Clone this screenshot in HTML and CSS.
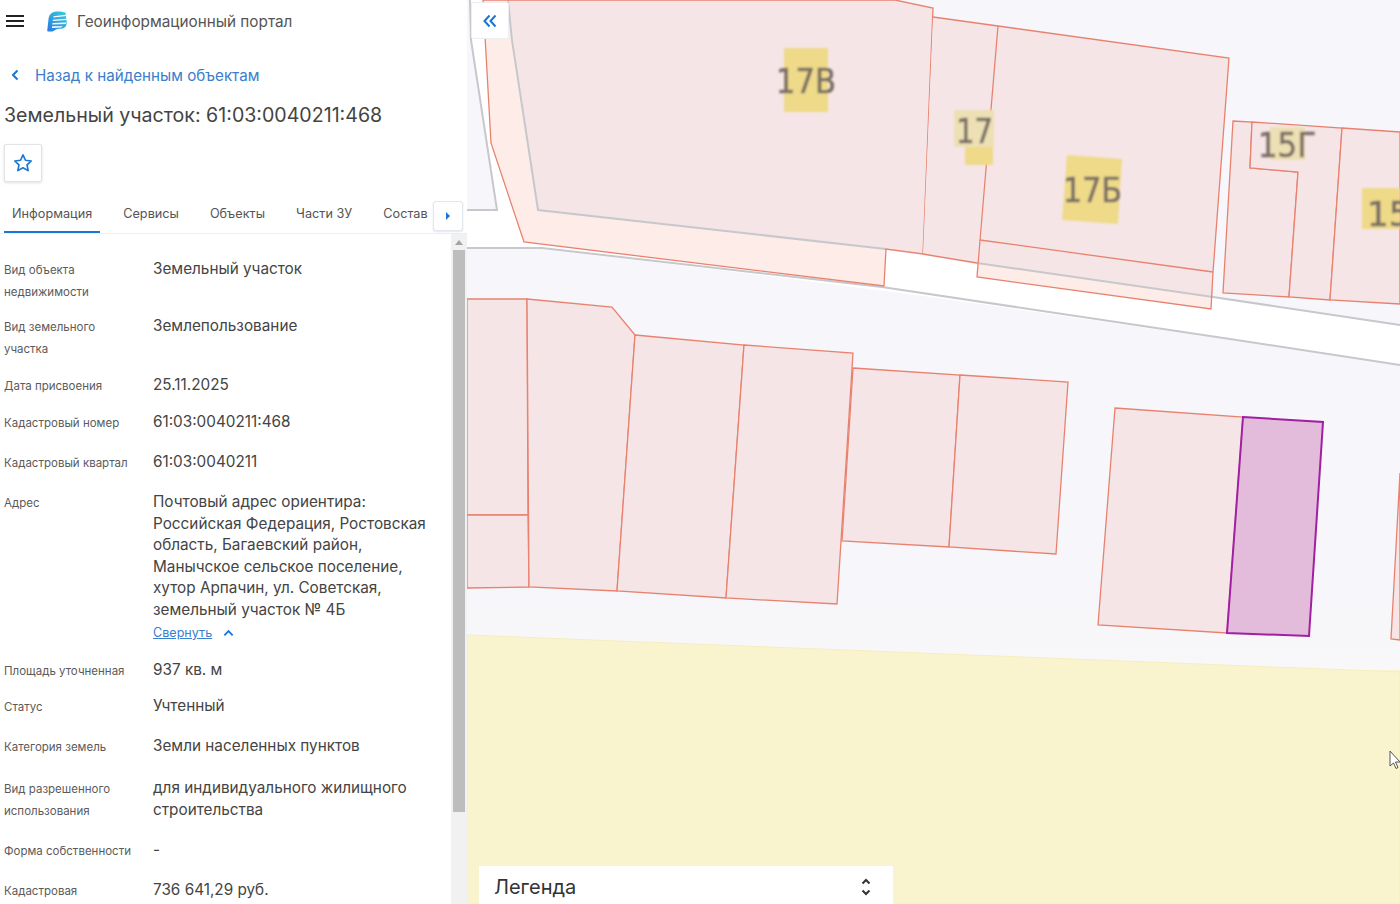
FILE: index.html
```html
<!DOCTYPE html>
<html lang="ru">
<head>
    <meta charset="UTF-8">
    <title>Геоинформационный портал</title>
    <link rel="stylesheet" href="styles.css">
</head>
<body>
    <div class="app">
        <aside class="panel">
            <header class="topbar">
                <button class="menu-btn" aria-label="Меню"><span></span><span></span><span></span></button>
                <svg class="logo" viewBox="0 0 20 21" aria-hidden="true">
                    <defs>
                        <linearGradient id="logoFill" x1="0" y1="1" x2="1" y2="0">
                            <stop offset="0" stop-color="#2a78e4"/>
                            <stop offset="1" stop-color="#3bd0dc"/>
                        </linearGradient>
                    </defs>
                    <path fill="url(#logoFill)" d="M9 .5c3.500-.3 7 .2 9.500 1L19.800 12c-.2 3-1.800 5-4.300 5.500L10 18l-4.500 2.500H1.500C.6 20.500.2 20 .3 19L1.500 8C2 3.500 5 .9 9 .5z"/>
                    <path fill="#fff" d="M6.500 5.200L19 3.800l.2 1.300-12.900 1.500zM5.900 8.700l13.600-.9v1.300l-13.700.9zM5.500 12.100l13.700-.5-.2 1.300-13.600.5zM5.100 15.300l10.900 0-2 1.300-9 .5z"/>
                </svg>
                <span class="portal-name">Геоинформационный портал</span>
            </header>

            <a class="back-link" href="#">
                <svg viewBox="0 0 8 12" aria-hidden="true"><path d="M6.500 1.500L2 6l4.500 4.500"/></svg>
                <span>Назад к найденным объектам</span>
            </a>

            <h1 class="object-title">Земельный участок: 61:03:0040211:468</h1>

            <button class="star-btn" aria-label="В избранное">
                <svg viewBox="0 0 24 24" aria-hidden="true"><path d="M12 3.200l2.700 5.800 6.300.8-4.600 4.300 1.200 6.200L12 17.200l-5.600 3.100 1.200-6.200L3 9.800l6.300-.8z"/></svg>
            </button>

            <nav class="tabs">
                <a class="tab active" href="#">Информация</a>
                <a class="tab" href="#">Сервисы</a>
                <a class="tab" href="#">Объекты</a>
                <a class="tab" href="#">Части ЗУ</a>
                <a class="tab" href="#">Состав</a>
                <button class="tabs-next" aria-label="Дальше"><span></span></button>
            </nav>

            <div class="details-wrap">
                <div class="details">
                    <div class="row row-57">
                        <div class="label">Вид объекта<br>недвижимости</div>
                        <div class="value">Земельный участок</div>
                    </div>
                    <div class="row row-59">
                        <div class="label">Вид земельного<br>участка</div>
                        <div class="value">Землепользование</div>
                    </div>
                    <div class="row row-37">
                        <div class="label">Дата присвоения</div>
                        <div class="value">25.11.2025</div>
                    </div>
                    <div class="row row-40">
                        <div class="label">Кадастровый номер</div>
                        <div class="value">61:03:0040211:468</div>
                    </div>
                    <div class="row row-40">
                        <div class="label">Кадастровый квартал</div>
                        <div class="value">61:03:0040211</div>
                    </div>
                    <div class="row row-address">
                        <div class="label">Адрес</div>
                        <div class="value">
                            Почтовый адрес ориентира:<br>
                            Российская Федерация, Ростовская<br>
                            область, Багаевский район,<br>
                            Манычское сельское поселение,<br>
                            хутор Арпачин, ул. Советская,<br>
                            земельный участок № 4Б
                            <a class="collapse-link" href="#">
                                <span>Свернуть</span>
                                <svg viewBox="0 0 12 8" aria-hidden="true"><path d="M1.500 6.500L6 2l4.500 4.500"/></svg>
                            </a>
                        </div>
                    </div>
                    <div class="row row-36">
                        <div class="label">Площадь уточненная</div>
                        <div class="value">937 кв. м</div>
                    </div>
                    <div class="row row-40">
                        <div class="label">Статус</div>
                        <div class="value">Учтенный</div>
                    </div>
                    <div class="row row-42">
                        <div class="label">Категория земель</div>
                        <div class="value">Земли населенных пунктов</div>
                    </div>
                    <div class="row row-62">
                        <div class="label">Вид разрешенного<br>использования</div>
                        <div class="value">для индивидуального жилищного<br>строительства</div>
                    </div>
                    <div class="row row-40">
                        <div class="label">Форма собственности</div>
                        <div class="value">-</div>
                    </div>
                    <div class="row">
                        <div class="label">Кадастровая</div>
                        <div class="value">736 641,29 руб.</div>
                    </div>
                </div>
                <div class="scrollbar">
                    <span class="scroll-up"></span>
                    <div class="scroll-thumb"></div>
                </div>
            </div>
        </aside>

        <main class="map">
            <svg class="map-canvas" viewBox="467 0 933 904" preserveAspectRatio="none" aria-hidden="true">
                <defs>
                    <filter id="soft"><feGaussianBlur stdDeviation="0.8"/></filter>
                    <linearGradient id="ground" x1="0" y1="0" x2="0" y2="1">
                        <stop offset="0" stop-color="#f6f6fb"/>
                        <stop offset="0.75" stop-color="#f6f6fb"/>
                        <stop offset="1" stop-color="#f8f8f9"/>
                    </linearGradient>
                </defs>

                <rect x="467" y="240" width="933" height="430" fill="url(#ground)"/>
                <polygon class="ground-top" points="467,0 1400,0 1400,330 467,250"/>
                <polygon class="sand" points="467,635 1400,672 1400,904 467,904"/>

                <!-- road -->
                <polygon class="road" points="467,0 483,0 491,143 524,242 467,247"/>
                <polygon class="road" points="467,212 538,210 886,249 980,265 1213,297 1400,325 1400,365 1230,340 930,297 760,275 542,249 467,248"/>
                <polygon class="yard" points="467,0 470,0 471,40 497,210 467,210"/>
                <polyline class="edge" points="470,0 471,40 497,210 467,210"/>
                <polyline class="edge" points="467,248 542,248 882,287 1230,339 1400,365"/>

                <!-- upper parcels -->
                <polygon class="parcel-strip" points="483,0 491,143 524,242 884,286 886,249 923,254 933,8 895,0"/>
                <polygon class="house" points="508,0 538,210 923,254 933,8 895,0"/>
                <polyline class="edge" points="508,0 512,40 538,210 886,249"/>
                <polyline class="edge" points="1213,297 1400,325"/>
                <polygon class="parcel-line" fill="none" points="483,0 491,143 524,242 884,286 886,249 923,254 933,8 895,0"/>

                <polygon class="house" points="933,17 998,26 977,263 923,254"/>
                <polygon class="parcel-strip" points="980,240 1213,272 1211,309 977,277"/>
                <polygon class="house" points="980,240 1213,272 1213,297 977,263"/>
                <polygon class="house" points="998,26 1229,58 1213,272 980,240"/>
                <polyline class="edge" points="977,263 1213,297"/>
                <polyline class="parcel-line" fill="none" points="933,17 998,26 1229,58 1213,272 1211,309 977,277 980,240 998,26"/>
                <polyline class="parcel-line" fill="none" points="923,254 977,263"/>
                <polyline class="parcel-line" fill="none" points="980,240 1213,272"/>

                <polygon class="parcel" points="1233,121 1252,122 1250,168 1298,172 1289,297 1223,293"/>
                <polygon class="parcel" points="1252,122 1342,128 1330,300 1289,297 1298,172 1250,168"/>
                <polygon class="parcel" points="1342,128 1400,132 1400,304 1330,300"/>

                <!-- house numbers -->
                <g filter="url(#soft)">
                    <rect class="tag" x="784" y="48" width="44" height="64"/>
                    <rect class="tag-pale" x="954" y="110" width="40" height="37"/>
                    <rect class="tag" x="965" y="147" width="28" height="18"/>
                    <polygon class="tag" points="1067,155 1122,159 1118,224 1062,220"/>
                    <rect class="tag-pale" x="1270" y="127" width="35" height="33"/>
                    <rect class="tag" x="1362" y="188" width="38" height="41"/>
                    <text class="house-no" x="776" y="93" textLength="60" lengthAdjust="spacingAndGlyphs">17В</text>
                    <text class="house-no" x="956" y="143" textLength="37" lengthAdjust="spacingAndGlyphs">17</text>
                    <text class="house-no" x="1063" y="202" textLength="59" lengthAdjust="spacingAndGlyphs">17Б</text>
                    <text class="house-no" x="1258" y="157" textLength="58" lengthAdjust="spacingAndGlyphs">15Г</text>
                    <text class="house-no" x="1367" y="226">15</text>
                </g>

                <!-- lower parcels -->
                <polygon class="parcel" points="467,299 527,299 528,515 467,515"/>
                <polygon class="parcel" points="467,515 528,515 529,587 467,588"/>
                <polygon class="parcel" points="527,299 612,307 635,335 617,591 529,587"/>
                <polygon class="parcel" points="635,335 744,345 726,598 617,591"/>
                <polygon class="parcel" points="744,345 853,353 837,604 726,598"/>
                <polygon class="parcel" points="853,368 960,375 949,547 842,541"/>
                <polygon class="parcel" points="960,375 1068,382 1056,554 949,547"/>
                <polygon class="parcel" points="1115,408 1243,417 1227,633 1098,625"/>
                <polygon class="parcel" points="1400,473 1391,639 1400,640"/>
                <polygon class="selected" points="1243,417 1323,422 1309,636 1227,633"/>

                <path class="cursor" d="M1390 751v15l3.500-3 2.500 5.500 2-1-2.500-5.500h4.500z"/>
            </svg>

            <button class="collapse-btn" aria-label="Свернуть панель">
                <svg viewBox="0 0 14 14" aria-hidden="true"><path d="M6.500 1.500L1.500 7l5 5.500M12.500 1.500L7.500 7l5 5.500"/></svg>
            </button>

            <div class="legend">
                <span>Легенда</span>
                <svg viewBox="0 0 12 20" aria-hidden="true"><path d="M2.500 6.500L6 3l3.500 3.500M2.500 13.500L6 17l3.500-3.500"/></svg>
            </div>
        </main>
    </div>
</body>
</html>
```

FILE: styles.css
```css
* {
    box-sizing: border-box;
}
html, body {
    height: 100%;
}
body {
    margin: 0;
    font-family: Inter, 'Noto Sans', sans-serif;
    color: #444;
    background: #fff;
    overflow: hidden;
}
button {
    font: inherit;
    cursor: pointer;
    padding: 0;
}
a {
    text-decoration: none;
}
.app {
    display: flex;
    height: 100vh;
}

/* left panel */
.panel {
    flex: 0 0 467px;
    min-width: 0;
    display: flex;
    flex-direction: column;
    height: 100%;
    overflow: hidden;
    background: #fff;
}
.topbar {
    display: flex;
    align-items: center;
    height: 42px;
    flex-shrink: 0;
}
.menu-btn {
    display: flex;
    flex-direction: column;
    gap: 3px;
    width: 18px;
    margin-left: 6px;
    border: none;
    background: none;
}
.menu-btn span {
    display: block;
    height: 2px;
    background: #222;
}
.logo {
    width: 20px;
    height: 21px;
    margin-left: 23px;
}
.portal-name {
    margin-left: 10px;
    font-size: 15.300px;
    color: #555;
}
.back-link {
    display: flex;
    align-items: center;
    height: 24px;
    margin-top: 21px;
    padding-left: 11px;
    font-size: 15.200px;
    color: #3b7ecb;
    flex-shrink: 0;
}
.back-link svg {
    width: 8px;
    height: 12px;
    margin-right: 16px;
    fill: none;
    stroke: #1976d2;
    stroke-width: 2;
}
.object-title {
    margin: 14px 0 15px 4px;
    font-size: 19.600px;
    font-weight: 400;
    line-height: 28px;
    color: #444;
    flex-shrink: 0;
}
.star-btn {
    display: flex;
    align-items: center;
    justify-content: center;
    width: 38px;
    height: 38px;
    margin-left: 4px;
    border: 1px solid #e3e3e3;
    border-radius: 2px;
    background: #fff;
    box-shadow: 0 1px 3px rgba(0, 0, 0, 0.12);
    flex-shrink: 0;
}
.star-btn svg {
    width: 22px;
    height: 22px;
    fill: none;
    stroke: #1976d2;
    stroke-width: 1.800;
    stroke-linejoin: round;
}
.tabs {
    display: flex;
    height: 40px;
    margin-top: 12px;
    padding-left: 4px;
    border-bottom: 1px solid #eee;
    flex-shrink: 0;
}
.tab {
    height: 39px;
    padding: 12px 8px 0;
    margin-right: 15px;
    font-size: 12.700px;
    line-height: 16px;
    color: #555;
    white-space: nowrap;
}
.tab.active {
    border-bottom: 2px solid #1976d2;
}
.tabs .tab:nth-last-child(2) {
    margin-right: 0;
    padding-right: 0;
}
.tabs-next {
    display: flex;
    align-items: center;
    justify-content: center;
    flex: 0 0 30px;
    height: 30px;
    margin: 7px 4px 0 auto;
    border: 1px solid #e2e6ee;
    border-radius: 3px;
    background: #fff;
    box-shadow: 0 1px 2px rgba(0, 0, 0, 0.1);
}
.tabs-next span {
    width: 0;
    height: 0;
    border-left: 4px solid #1976d2;
    border-top: 4px solid transparent;
    border-bottom: 4px solid transparent;
}
.details-wrap {
    display: flex;
    flex: 1;
    min-height: 0;
}
.details {
    flex: 1;
    min-width: 0;
    overflow: hidden;
    padding: 24px 20px 0 4px;
}
.scrollbar {
    display: flex;
    flex-direction: column;
    align-items: center;
    flex: 0 0 16px;
    background: #f1f1f1;
}
.scroll-up {
    width: 0;
    height: 0;
    margin: 6px 0 5px;
    border-left: 4px solid transparent;
    border-right: 4px solid transparent;
    border-bottom: 5px solid #a3a3a3;
}
.scroll-thumb {
    width: 12px;
    height: 562px;
    background: #bdbdbd;
}
.row {
    display: flex;
}
.label {
    flex: 0 0 149px;
    padding-top: 2px;
    font-size: 11.500px;
    line-height: 21.500px;
    color: #5b5b5b;
    white-space: nowrap;
}
.value {
    flex: 1;
    font-size: 15.300px;
    line-height: 21.500px;
    color: #444;
    white-space: nowrap;
}
.row-36 { height: 36px; }
.row-37 { height: 37px; }
.row-40 { height: 40px; }
.row-42 { height: 42px; }
.row-57 { height: 57px; }
.row-59 { height: 59px; }
.row-62 { height: 62px; }
.row-address { height: 168px; }
.collapse-link {
    display: flex;
    align-items: center;
    height: 20px;
    margin-top: 3px;
    font-size: 12.600px;
    line-height: 20px;
    color: #3b7ecb;
}
.collapse-link span {
    text-decoration: underline;
}
.collapse-link svg {
    width: 11px;
    height: 8px;
    margin-left: 11px;
    fill: none;
    stroke: #1976d2;
    stroke-width: 2;
}

/* map */
.map {
    position: relative;
    flex: 1;
    min-width: 0;
    overflow: hidden;
    background: #f9f4ce;
}
.map-canvas {
    display: block;
    width: 100%;
    height: 100%;
}
.ground-top { fill: #f6f6fb; }
.sand { fill: #f9f4ce; stroke: #f3eec0; stroke-width: 1; }
.road { fill: #fff; }
.yard { fill: #f6f6fb; }
.edge {
    fill: none;
    stroke: #c8c8cc;
    stroke-width: 2;
    filter: blur(0.6px);
}
.parcel-strip { fill: #fdece8; }
.house { fill: #f6e5e6; }
.parcel {
    fill: #f6e5e6;
    stroke: #e8826f;
    stroke-width: 1.300;
}
.parcel-line {
    stroke: #e8826f;
    stroke-width: 1.300;
}
.selected {
    fill: #e3bcdc;
    stroke: #a11fa3;
    stroke-width: 2;
}
.tag { fill: #eeda88; }
.tag-pale { fill: #ece0b4; }
.house-no {
    font-family: 'DejaVu Sans', sans-serif;
    font-size: 34px;
    fill: #7a6e66;
    stroke: #7a6e66;
    stroke-width: 0.700;
}
.cursor {
    fill: #fff;
    stroke: #555;
    stroke-width: 1;
}
.collapse-btn {
    position: absolute;
    top: 2px;
    left: 4px;
    display: flex;
    align-items: center;
    justify-content: center;
    width: 38px;
    height: 37px;
    border: 1px solid #eceef3;
    border-radius: 2px;
    background: #fff;
}
.collapse-btn svg {
    width: 14px;
    height: 14px;
    fill: none;
    stroke: #1976d2;
    stroke-width: 2;
}
.legend {
    position: absolute;
    left: 12px;
    bottom: 0;
    display: flex;
    align-items: center;
    justify-content: space-between;
    width: 414px;
    height: 38px;
    padding: 3px 21px 0 15px;
    background: #fff;
    font-size: 20px;
    color: #333;
}
.legend svg {
    width: 12px;
    height: 20px;
    fill: none;
    stroke: #333;
    stroke-width: 2;
}
```
